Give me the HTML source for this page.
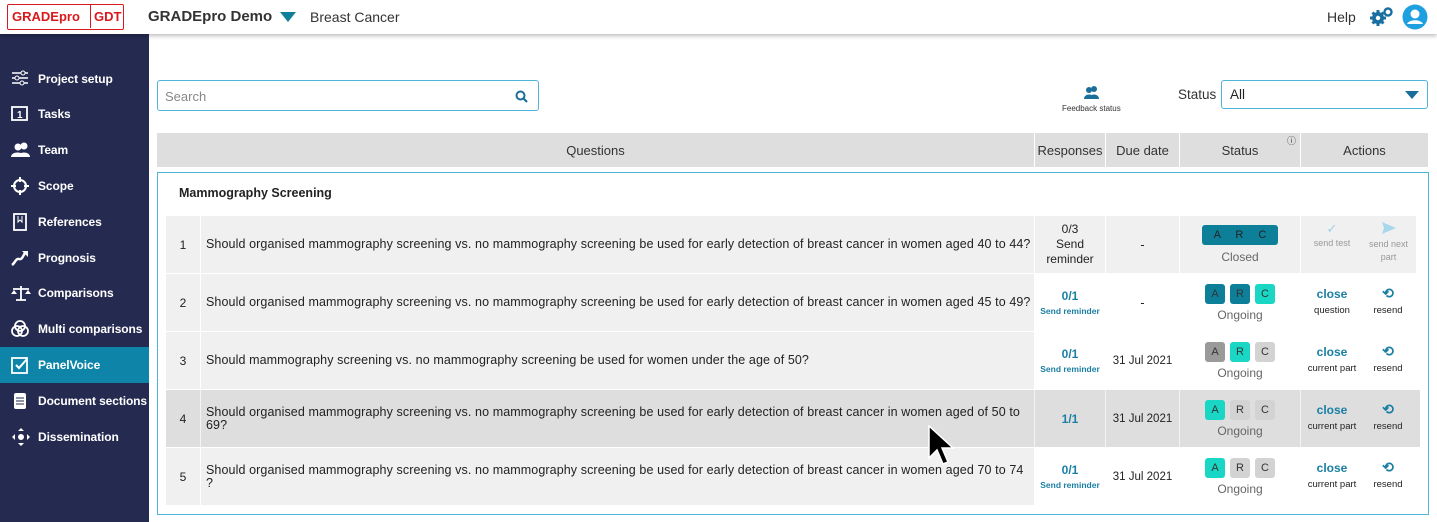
<!DOCTYPE html>
<html><head><meta charset="utf-8"><style>
*{box-sizing:border-box;margin:0;padding:0}
body{width:1437px;height:522px;overflow:hidden;background:#fff;font-family:"Liberation Sans",sans-serif;color:#222;position:relative}
.abs{position:absolute}
.top{left:0;top:0;width:1437px;height:34px;background:#fff;box-shadow:0 2px 4px rgba(0,0,0,.25);z-index:2}
.side{left:0;top:34px;width:149px;height:488px;background:#252a50}
.nav{position:absolute;left:0;width:149px;height:36px;color:#fff;font-size:12px;font-weight:bold;display:flex;align-items:center;padding-left:38px;white-space:nowrap;letter-spacing:-0.1px}
.nav.act{background:#0e85a8}
.nav svg{position:absolute;left:11px;top:9px}
.hdr{top:133px;height:34px;background:#dedede;font-size:13px;display:flex;align-items:center;justify-content:center;color:#333}
.cell{position:absolute;display:flex;align-items:center;font-size:12.5px;color:#222}
.q{letter-spacing:0.1px;white-space:nowrap;line-height:13px}
.c{justify-content:center;text-align:center;flex-direction:column}
.blue{color:#1a7fa3;font-weight:bold}
.b{display:inline-block;width:20px;height:20px;border-radius:3px;font-size:11px;line-height:20px;text-align:center;margin:0 2.5px;color:#333}
.g{background:#d3d3d3}.dg{background:#9a9a9a}.t{background:#1ad6c4}.d{background:#0e7f99}
</style></head><body>
<div class="abs top">
  <div class="abs" style="left:7px;top:4px;width:117px;height:26px;border:1.5px solid #d9191c;border-radius:2px;color:#d9191c;font-weight:bold;font-size:13px;line-height:23px;padding-left:4px">GRADEpro<span style="position:absolute;left:82px;top:0;height:23px;border-left:1.5px solid #d9191c;padding-left:3px">GDT</span></div>
  <div class="abs" style="left:148px;top:8px;font-weight:bold;font-size:15px;color:#333">GRADEpro Demo</div>
  <svg class="abs" style="left:280px;top:12px" width="16" height="10"><path d="M0 0H16L8 10Z" fill="#0e7f99"/></svg>
  <div class="abs" style="left:310px;top:9px;font-size:14px;color:#333">Breast Cancer</div>
  <div class="abs" style="left:1327px;top:9px;font-size:14px;color:#333">Help</div>
  <svg class="abs" style="left:1368px;top:7px" width="26" height="20"><g stroke="#1a6fa0" stroke-width="3"><path d="M10 3v16M2 11h16M4.5 5.5l11 11M15.5 5.5l-11 11"/></g><circle cx="10" cy="11" r="6" fill="#1a6fa0"/><circle cx="10" cy="11" r="2.2" fill="#fff"/><circle cx="20" cy="5" r="3.5" fill="none" stroke="#1a6fa0" stroke-width="2.4"/></svg>
  <svg class="abs" style="left:1402px;top:4px" width="26" height="26"><circle cx="13" cy="13" r="12.5" fill="#1ea0e0"/><circle cx="13" cy="10" r="4.5" fill="#fff"/><path d="M5 20c2-5 14-5 16 0z" fill="#fff"/></svg>
</div>
<div class="abs side">
  <div class="nav" style="top:27px"><svg width="18" height="16"><path d="M1 3h16M1 8h16M1 13h16" stroke="#fff" stroke-width="1.5"/><circle cx="12" cy="3" r="2" fill="#252a50" stroke="#fff"/><circle cx="6" cy="8" r="2" fill="#252a50" stroke="#fff"/><circle cx="11" cy="13" r="2" fill="#252a50" stroke="#fff"/></svg>Project setup</div>
  <div class="nav" style="top:62px"><svg width="18" height="16"><rect x="1" y="2" width="15" height="13" fill="none" stroke="#fff" stroke-width="1.8"/><text x="6" y="13" fill="#fff" font-size="10" font-weight="bold" font-family="Liberation Sans">1</text></svg>Tasks</div>
  <div class="nav" style="top:98px"><svg width="20" height="16"><circle cx="13" cy="5" r="3.5" fill="#fff"/><path d="M7 16c0-6 12-6 12 0z" fill="#fff"/><circle cx="7" cy="6" r="3.5" fill="#fff"/><path d="M0 16c0-6 13-6 13 0z" fill="#fff"/></svg>Team</div>
  <div class="nav" style="top:134px"><svg width="18" height="18"><circle cx="9" cy="9" r="6" fill="none" stroke="#fff" stroke-width="2"/><path d="M9 0v5M9 13v5M0 9h5M13 9h5" stroke="#fff" stroke-width="2"/></svg>Scope</div>
  <div class="nav" style="top:170px"><svg width="18" height="18"><rect x="3" y="1" width="12" height="16" fill="none" stroke="#fff" stroke-width="1.8"/><path d="M7 3v6l2-2 2 2V3" stroke="#fff" fill="none"/></svg>References</div>
  <div class="nav" style="top:206px"><svg width="18" height="18"><path d="M1 16c3-2 4-7 7-6s4-3 6-6" stroke="#fff" stroke-width="2.5" fill="none"/><path d="M11 2h6v6z" fill="#fff"/></svg>Prognosis</div>
  <div class="nav" style="top:241px"><svg width="20" height="18"><path d="M2 5h16M10 2v14M5 16h10" stroke="#fff" stroke-width="1.8"/><path d="M0 10h6l-3-4zM14 10h6l-3-4z" fill="#fff"/></svg>Comparisons</div>
  <div class="nav" style="top:277px"><svg width="18" height="18"><circle cx="9" cy="6" r="5" fill="none" stroke="#fff" stroke-width="1.8"/><circle cx="6" cy="11" r="5" fill="none" stroke="#fff" stroke-width="1.8"/><circle cx="12" cy="11" r="5" fill="none" stroke="#fff" stroke-width="1.8"/></svg>Multi comparisons</div>
  <div class="nav act" style="top:313px"><svg width="18" height="18"><rect x="1" y="2" width="15" height="15" fill="none" stroke="#fff" stroke-width="1.8"/><path d="M5 9l3 3 8-9" stroke="#fff" stroke-width="2" fill="none"/></svg>PanelVoice</div>
  <div class="nav" style="top:349px"><svg width="18" height="18"><rect x="3" y="1" width="12" height="16" rx="2" fill="#fff"/><path d="M5 6h8M5 9h8M5 12h8" stroke="#252a50"/></svg>Document sections</div>
  <div class="nav" style="top:385px"><svg width="20" height="18"><circle cx="10" cy="9" r="3" fill="#fff"/><path d="M10 0l3 3h-6zM10 18l3-3h-6zM1 9l3-3v6zM19 9l-3-3v6z" fill="#fff"/></svg>Dissemination</div>
</div>

<div class="abs" style="left:157px;top:80px;width:382px;height:31px;border:1px solid #4fb3dc;border-radius:3px;font-size:13px;color:#888;padding:8px 7px">Search
  <svg class="abs" style="right:10px;top:9px" width="13" height="13"><circle cx="5.5" cy="5.5" r="4" fill="none" stroke="#1a6f9a" stroke-width="2"/><path d="M8.5 8.5l3.5 3.5" stroke="#1a6f9a" stroke-width="2.2"/></svg></div>
<svg class="abs" style="left:1084px;top:85px" width="16" height="14"><circle cx="10" cy="4" r="3" fill="#1a6f9a"/><path d="M5 14c0-6 10-6 10 0z" fill="#1a6f9a"/><circle cx="5" cy="5" r="3" fill="#1a6f9a"/><path d="M0 14c0-6 10-6 10 0z" fill="#1a6f9a"/></svg>
<div class="abs" style="left:1062px;top:104px;font-size:8px;color:#333">Feedback status</div>
<div class="abs" style="left:1178px;top:87px;font-size:13.5px;color:#333">Status</div>
<div class="abs" style="left:1221px;top:80px;width:207px;height:29px;border:1px solid #4fb3dc;border-radius:3px;font-size:13.5px;padding:6px 8px">All<svg class="abs" style="right:8px;top:10px" width="14" height="8"><path d="M0 0h14L7 8z" fill="#1a6f9a"/></svg></div>

<div class="abs hdr" style="left:157px;width:877px">Questions</div>
<div class="abs hdr" style="left:1035px;width:70px">Responses</div>
<div class="abs hdr" style="left:1106px;width:73px">Due date</div>
<div class="abs hdr" style="left:1180px;width:120px">Status<span style="position:absolute;right:4px;top:1px;font-size:9px">ⓘ</span></div>
<div class="abs hdr" style="left:1301px;width:127px">Actions</div>

<div class="abs" style="left:157px;top:172px;width:1272px;height:343px;border:1px solid #4fb3dc"></div>
<div class="abs" style="left:179px;top:186px;font-size:12.5px;font-weight:bold;color:#222">Mammography Screening</div>

<!-- row 1 -->
<div class="cell" style="left:166px;top:216px;width:34px;height:57px;background:#f0f0f0;justify-content:center;font-size:12px">1</div>
<div class="cell q" style="left:201px;top:216px;width:833px;height:57px;background:#f0f0f0;padding-left:5px">Should organised mammography screening vs. no mammography screening be used for early detection of breast cancer in women aged 40 to 44?</div>
<div class="cell c" style="left:1035px;top:216px;width:70px;height:57px;background:#f0f0f0;line-height:15px;font-size:12px">0/3<br>Send<br>reminder</div>
<div class="cell c" style="left:1106px;top:216px;width:73px;height:57px;background:#f0f0f0">-</div>
<div class="cell c" style="left:1180px;top:216px;width:120px;height:57px;background:#f0f0f0"><div style="background:#0e7f99;width:76px;height:20px;border-radius:3px;font-size:11px;line-height:20px;color:#222;word-spacing:12px">A R C</div><div style="color:#666;margin-top:5px;font-size:12px">Closed</div></div>
<div class="cell" style="left:1301px;top:216px;width:115px;height:57px;background:#f0f0f0;font-size:9px;color:#999">
 <div class="abs" style="left:2px;top:6px;text-align:center;width:58px;white-space:nowrap;line-height:13px"><span style="color:#9fd0e6;font-size:13px">✓</span><br>send test</div>
 <div class="abs" style="left:60px;top:6px;text-align:center;width:55px;line-height:13px"><svg width="14" height="12"><path d="M0 0l14 6-14 6 2-6z" fill="#a8d8ec"/></svg><br>send next<br>part</div></div>

<!-- row 2 -->
<div class="cell" style="left:166px;top:274px;width:34px;height:57px;background:#f0f0f0;justify-content:center;font-size:12px">2</div>
<div class="cell q" style="left:201px;top:274px;width:833px;height:57px;background:#f0f0f0;padding-left:5px">Should organised mammography screening vs. no mammography screening be used for early detection of breast cancer in women aged 45 to 49?</div>
<div class="cell c" style="left:1035px;top:274px;width:70px;height:57px"><span class="blue" style="font-size:12px">0/1</span><span class="blue" style="font-size:8.5px;margin-top:3px">Send reminder</span></div>
<div class="cell c" style="left:1106px;top:274px;width:73px;height:57px">-</div>
<div class="cell c" style="left:1180px;top:274px;width:120px;height:57px"><div><span class="b d">A</span><span class="b d">R</span><span class="b t">C</span></div><div style="color:#666;margin-top:4px;font-size:12px">Ongoing</div></div>
<div class="cell" style="left:1301px;top:274px;width:115px;height:57px;font-size:9.5px"><div class="abs" style="left:0;top:13px;width:62px;text-align:center"><span class="blue" style="font-size:12px">close</span><br><span style="line-height:20px">question</span></div><div class="abs" style="left:62px;top:11px;width:50px;text-align:center"><span class="blue" style="font-size:14px">⟲</span><br><span style="line-height:18px">resend</span></div></div>

<!-- row 3 -->
<div class="cell" style="left:166px;top:332px;width:34px;height:57px;background:#f0f0f0;justify-content:center;font-size:12px">3</div>
<div class="cell q" style="left:201px;top:332px;width:833px;height:57px;background:#f0f0f0;padding-left:5px">Should mammography screening vs. no mammography screening be used for women under the age of 50?</div>
<div class="cell c" style="left:1035px;top:332px;width:70px;height:57px"><span class="blue" style="font-size:12px">0/1</span><span class="blue" style="font-size:8.5px;margin-top:3px">Send reminder</span></div>
<div class="cell c" style="left:1106px;top:332px;width:73px;height:57px;font-size:11.5px">31 Jul 2021</div>
<div class="cell c" style="left:1180px;top:332px;width:120px;height:57px"><div><span class="b dg">A</span><span class="b t">R</span><span class="b g">C</span></div><div style="color:#666;margin-top:4px;font-size:12px">Ongoing</div></div>
<div class="cell" style="left:1301px;top:332px;width:115px;height:57px;font-size:9.5px"><div class="abs" style="left:0;top:13px;width:62px;text-align:center"><span class="blue" style="font-size:12px">close</span><br><span style="line-height:20px">current part</span></div><div class="abs" style="left:62px;top:11px;width:50px;text-align:center"><span class="blue" style="font-size:14px">⟲</span><br><span style="line-height:18px">resend</span></div></div>

<!-- row 4 -->
<div class="abs" style="left:166px;top:390px;width:1254px;height:57px;background:#dedede"></div>
<div class="cell" style="left:166px;top:390px;width:34px;height:57px;justify-content:center;font-size:12px">4</div>
<div class="abs" style="left:200px;top:390px;width:1px;height:57px;background:#f4f4f4"></div>
<div class="cell q" style="left:201px;top:390px;width:833px;height:57px;padding-left:5px">Should organised mammography screening vs. no mammography screening be used for early detection of breast cancer in women aged of 50 to<br>69?</div>
<div class="cell c" style="left:1034px;top:390px;width:71px;height:57px;border-left:1px solid #f4f4f4"><span class="blue" style="font-size:12px">1/1</span></div>
<div class="cell c" style="left:1105px;top:390px;width:74px;height:57px;font-size:11.5px;border-left:1px solid #f4f4f4">31 Jul 2021</div>
<div class="cell c" style="left:1179px;top:390px;width:121px;height:57px;border-left:1px solid #f4f4f4"><div><span class="b t">A</span><span class="b g">R</span><span class="b g">C</span></div><div style="color:#666;margin-top:4px;font-size:12px">Ongoing</div></div>
<div class="cell" style="left:1300px;top:390px;width:116px;height:57px;font-size:9.5px;border-left:1px solid #f4f4f4"><div class="abs" style="left:0;top:13px;width:62px;text-align:center"><span class="blue" style="font-size:12px">close</span><br><span style="line-height:20px">current part</span></div><div class="abs" style="left:62px;top:11px;width:50px;text-align:center"><span class="blue" style="font-size:14px">⟲</span><br><span style="line-height:18px">resend</span></div></div>

<!-- row 5 -->
<div class="cell" style="left:166px;top:448px;width:34px;height:57px;background:#f0f0f0;justify-content:center;font-size:12px">5</div>
<div class="cell q" style="left:201px;top:448px;width:833px;height:57px;background:#f0f0f0;padding-left:5px">Should organised mammography screening vs. no mammography screening be used for early detection of breast cancer in women aged 70 to 74<br>?</div>
<div class="cell c" style="left:1035px;top:448px;width:70px;height:57px"><span class="blue" style="font-size:12px">0/1</span><span class="blue" style="font-size:8.5px;margin-top:3px">Send reminder</span></div>
<div class="cell c" style="left:1106px;top:448px;width:73px;height:57px;font-size:11.5px">31 Jul 2021</div>
<div class="cell c" style="left:1180px;top:448px;width:120px;height:57px"><div><span class="b t">A</span><span class="b g">R</span><span class="b g">C</span></div><div style="color:#666;margin-top:4px;font-size:12px">Ongoing</div></div>
<div class="cell" style="left:1301px;top:448px;width:115px;height:57px;font-size:9.5px"><div class="abs" style="left:0;top:13px;width:62px;text-align:center"><span class="blue" style="font-size:12px">close</span><br><span style="line-height:20px">current part</span></div><div class="abs" style="left:62px;top:11px;width:50px;text-align:center"><span class="blue" style="font-size:14px">⟲</span><br><span style="line-height:18px">resend</span></div></div>

<svg class="abs" style="left:928px;top:425px" width="28" height="44"><path d="M1 1v32l8-8 6 14 5-2-6-14h11z" fill="#000" stroke="#fff" stroke-width="1.5"/></svg>
</body></html>
